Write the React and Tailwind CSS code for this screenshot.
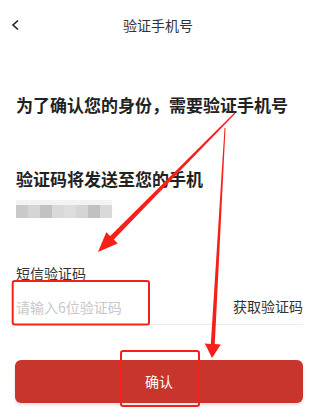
import React from 'react';

const phoneBlocks = ['#c9c9c9', '#d5d5d5', '#c2c2c2', '#d9d9d9', '#dddddd', '#d5d5d5', '#c1c1c1', '#d9d9d9'];

export default function App() {
  return (
    <div
      className="relative w-[328px] h-[416px] overflow-hidden bg-white text-[#333]"
      style={{ fontFamily: '"Noto Sans CJK SC", "Noto Sans", sans-serif' }}
    >
      {/* Header */}
      <div className="grid grid-cols-[34px_1fr_46px] items-center h-[50px]">
        <div className="pl-[11px]">
          <svg width="10" height="12" viewBox="0 0 10 12">
            <polyline points="7,1.5 2,6 7,10.5" fill="none" stroke="#222" strokeWidth="1.6" />
          </svg>
        </div>
        <div className="text-center text-[14px] leading-5 text-[#333]">验证手机号</div>
        <div />
      </div>

      {/* Body */}
      <div className="px-4">
        <h1 className="mt-[43px] text-[17px] leading-6 font-bold text-[#222]">
          为了确认您的身份，需要验证手机号
        </h1>
        <h2 className="mt-[50px] text-[17px] leading-6 font-bold text-[#222]">验证码将发送至您的手机</h2>

        {/* Blurred phone number */}
        <div className="mt-[9px] h-[18px] w-[96px] flex flex-col">
          <div className="h-[5px] bg-[#f3f3f3]" />
          <div className="flex flex-1">
            {phoneBlocks.map((c, i) => (
              <div key={i} className="w-[12px] h-full" style={{ background: c }} />
            ))}
          </div>
        </div>

        <div className="mt-[45px] text-[14px] leading-5 text-[#333]">短信验证码</div>
      </div>

      {/* Input row */}
      <div className="ml-4 mr-[25px] mt-[7px] h-[35px] flex items-center justify-between border-b border-[#ececec]">
        <input
          className="w-[140px] text-[14px] outline-none bg-transparent placeholder:text-[#c8c8c8]"
          placeholder="请输入6位验证码"
        />
        <span className="text-[14px] text-[#333] pb-[2px]">获取验证码</span>
      </div>

      {/* Confirm */}
      <button className="ml-[15px] mt-[35px] w-[288px] h-[43px] rounded-[6px] bg-[#c8352c] text-white text-[14px] shadow-[0_2px_3px_rgba(0,0,0,0.12)]">
        确认
      </button>

      {/* Annotation overlay */}
      <svg className="absolute inset-0 pointer-events-none" width="328" height="416" viewBox="0 0 328 416">
        <rect x="12.7" y="281" width="136.3" height="43.5" rx="2" fill="none" stroke="#f5201a" strokeWidth="2" />
        <rect x="121" y="351" width="78" height="55" rx="2" fill="none" stroke="#f5201a" strokeWidth="2" />
        <polygon
          points="234.6,112.6 110.2,236 106.3,232.2 98,252 117.7,243.4 113.8,239.6 235.4,113.4"
          fill="#f5201a"
        />
        <polygon
          points="224.5,128 210.8,343.9 204.8,343.5 212,358 220.8,344.5 214.8,344.1 225.5,128"
          fill="#f5201a"
        />
      </svg>
    </div>
  );
}
